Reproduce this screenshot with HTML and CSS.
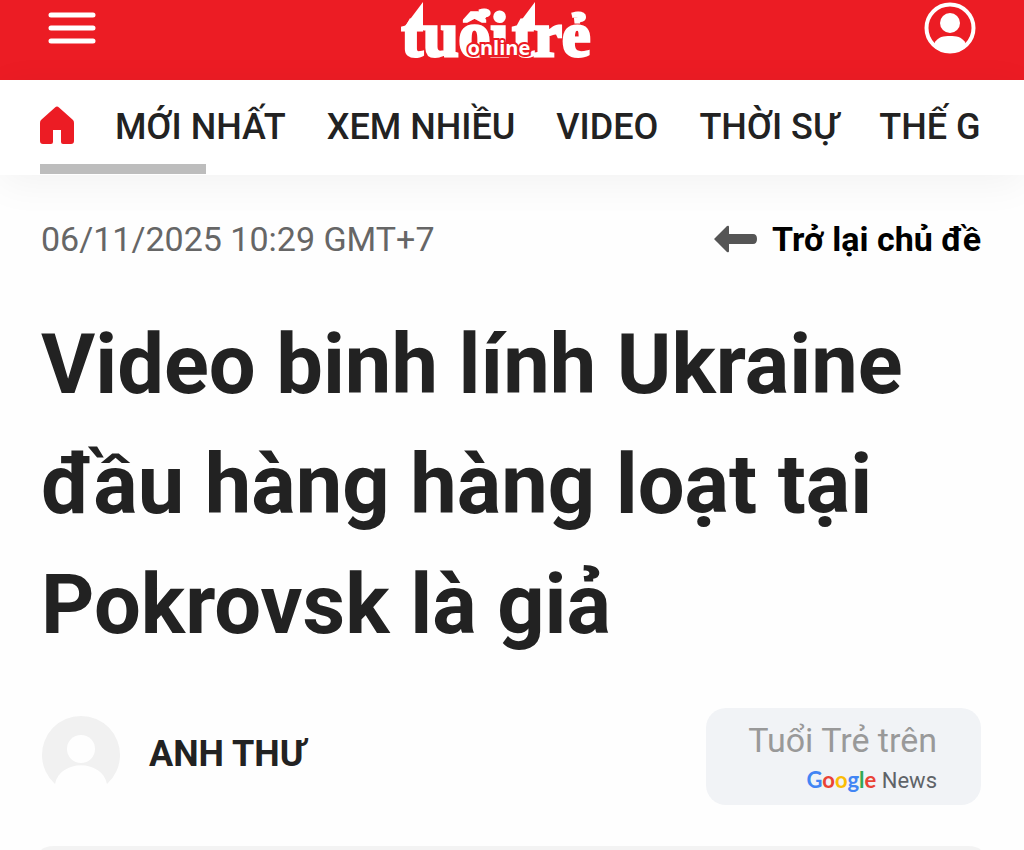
FILE: index.html
```html
<!DOCTYPE html>
<html lang="vi">
<head>
  <meta charset="UTF-8" />
  <title>Video binh lính Ukraine đầu hàng hàng loạt tại Pokrovsk là giả</title>
  <meta name="viewport" content="width=device-width, initial-scale=1.0" />
  <link rel="stylesheet" href="styles.css">
</head>
<body>
  <header class="header">
    <button class="icon-btn menu-btn" aria-label="Menu">
      <svg width="48" height="34" viewBox="0 0 48 34">
        <path d="M3 4h42M3 17h42M3 30h42" stroke="#fff" stroke-width="5" stroke-linecap="round"/>
      </svg>
    </button>
    <a href="#" class="logo">
      <span class="logo-words"><span>tuổi</span><span>trẻ</span></span>
      <!-- arrow tips over the two t letters -->
      <svg class="logo-tips" width="188" height="60" viewBox="0 0 188 60">
        <path d="M0 28L21 0v28zM112 28L133 0v28z" fill="#fff"/>
      </svg>
      <span class="logo-sub">online</span>
    </a>
    <button class="icon-btn" aria-label="Tài khoản">
      <svg width="52" height="52" viewBox="0 0 52 52">
        <circle cx="26" cy="26" r="23.5" fill="none" stroke="#fff" stroke-width="4"/>
        <circle cx="26" cy="21" r="10" fill="#fff"/>
        <path d="M10 42C14 34 20 34 26 34s12 0 16 8C37 48 32 50 26 50s-11-2-16-8z" fill="#fff"/>
      </svg>
    </button>
  </header>

  <nav class="nav">
    <div class="nav-list">
      <a href="#" class="home" aria-label="Trang chủ">
        <svg width="34" height="42" viewBox="0 0 34 42">
          <path d="M15 1.5q2-2 4 0L33 14q1 1 1 3v18q0 3-3 3H23q-2 0-2-2V24h-8v12q0 2-2 2H3q-3 0-3-3V17q0-2 1-3z" fill="#ec1c24"/>
        </svg>
      </a>
      <a href="#">MỚI NHẤT</a>
      <a href="#">XEM NHIỀU</a>
      <a href="#">VIDEO</a>
      <a href="#">THỜI SỰ</a>
      <a href="#">THẾ G</a>
    </div>
    <div class="nav-thumb"></div>
  </nav>

  <main class="article">
    <div class="meta">
      <time class="date">06/11/2025 10:29 GMT+7</time>
      <a href="#" class="back">
        <svg width="44" height="28" viewBox="0 0 44 28">
          <path d="M0 14L13 1q2-1 2 1v7h24q4 0 4 5t-4 5H15v7q0 2-2 1z" fill="#555"/>
        </svg>
        Trở lại chủ đề
      </a>
    </div>

    <h1 class="title">Video binh lính Ukraine đầu hàng hàng loạt tại Pokrovsk là giả</h1>

    <div class="author-row">
      <div class="author">
        <svg width="80" height="80" viewBox="0 0 80 80">
          <path d="M14 69A39 39 0 1 1 66 69C61 44 19 44 14 69z" fill="#f1f1f1"/>
          <circle cx="40" cy="34" r="14" fill="#fefefe"/>
        </svg>
        <a href="#" class="author-name">ANH THƯ</a>
      </div>
      <a href="#" class="gnews">
        <span class="gnews-top">Tuổi Trẻ trên</span>
        <span class="gnews-brand"><span class="google"><span class="blue">G</span><span class="red">o</span><span class="yellow">o</span><span class="blue">g</span><span class="green">l</span><span class="red">e</span></span> News</span>
      </a>
    </div>

    <div class="next-box"></div>
  </main>
</body>
</html>
```
FILE: styles.css
```css
* { box-sizing: border-box; margin: 0; padding: 0; }

body {
  font-family: Roboto, sans-serif;
  background: #fefefe;
  color: #222;
}

a {
  color: inherit;
  text-decoration: none;
}

svg {
  display: block;
  flex-shrink: 0;
}

.header {
  display: flex;
  justify-content: space-between;
  align-items: flex-start;
  height: 80px;
  padding: 2px 48px 0;
  background: #ec1c24;
}

.icon-btn {
  border: none;
  background: none;
  cursor: pointer;
}

.menu-btn {
  padding-top: 9px;
}

.logo {
  position: relative;
  margin-right: 28px;
  color: #fff;
}

.logo-words {
  display: flex;
  gap: 4px;
  font-family: "Liberation Serif", serif;
  font-weight: bold;
  font-size: 64px;
  line-height: 66px;
  -webkit-text-stroke: 3px #fff;
}

.logo-tips {
  position: absolute;
  left: 0;
  top: 0;
}

.logo-sub {
  position: absolute;
  left: 66px;
  top: 34px;
  font-family: "Open Sans", sans-serif;
  font-weight: bold;
  font-size: 20px;
  line-height: 24px;
  -webkit-text-stroke: 4px #ec1c24;
  paint-order: stroke fill;
}

.nav {
  height: 95px;
  padding: 0 40px;
  background: #fff;
  box-shadow: 0 8px 40px rgba(0, 0, 0, 0.05);
}

.nav-list {
  display: flex;
  align-items: center;
  gap: 41px;
  height: 84px;
  padding-top: 10px;
  font-size: 36px;
  font-weight: 500;
  white-space: nowrap;
}

.nav-thumb {
  width: 166px;
  height: 10px;
  background: #bdbdbd;
}

.article {
  padding: 40px 43px 0 41px;
}

.meta {
  display: flex;
  justify-content: space-between;
  align-items: center;
  font-size: 34px;
  line-height: 48px;
}

.date {
  color: #666;
}

.back {
  display: flex;
  align-items: center;
  gap: 14px;
  color: #000;
  font-weight: bold;
}

.title {
  margin-top: 42px;
  font-size: 83px;
  line-height: 120px;
}

.author-row {
  display: flex;
  justify-content: space-between;
  align-items: flex-start;
  margin-top: 43px;
}

.author {
  display: flex;
  align-items: center;
  gap: 28px;
  padding-top: 7px;
}

.author-name {
  padding-bottom: 2px;
  font-size: 36px;
  font-weight: bold;
}

.gnews {
  display: flex;
  flex-direction: column;
  align-items: flex-end;
  padding: 11px 44px 5px 42px;
  border-radius: 20px;
  background: #f1f3f6;
}

.gnews-top {
  color: #999;
  font-size: 34px;
  line-height: 42px;
}

.gnews-brand {
  color: #5f6368;
  font-family: Roboto, sans-serif;
  font-size: 22px;
  line-height: 38px;
}

.google {
  font-family: Lato, sans-serif;
  font-weight: bold;
}
.blue { color: #4285f4; }
.red { color: #ea4335; }
.yellow { color: #fbbc05; }
.green { color: #34a853; }

.next-box {
  height: 5px;
  margin-top: 41px;
  border-radius: 14px 14px 0 0 / 5px 5px 0 0;
  background: #f3f3f3;
}
```
